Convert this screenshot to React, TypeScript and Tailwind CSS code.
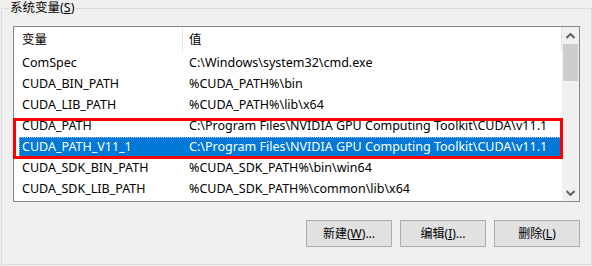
import React from "react";

const rows = [
  { name: "ComSpec", value: "C:\\Windows\\system32\\cmd.exe" },
  { name: "CUDA_BIN_PATH", value: "%CUDA_PATH%\\bin" },
  { name: "CUDA_LIB_PATH", value: "%CUDA_PATH%\\lib\\x64" },
  { name: "CUDA_PATH", value: "C:\\Program Files\\NVIDIA GPU Computing Toolkit\\CUDA\\v11.1" },
  { name: "CUDA_PATH_V11_1", value: "C:\\Program Files\\NVIDIA GPU Computing Toolkit\\CUDA\\v11.1", selected: true },
  { name: "CUDA_SDK_BIN_PATH", value: "%CUDA_SDK_PATH%\\bin\\win64" },
  { name: "CUDA_SDK_LIB_PATH", value: "%CUDA_SDK_PATH%\\common\\lib\\x64" },
];

const font = { fontFamily: '"Noto Sans", "Noto Sans CJK SC", sans-serif' };

function Btn({ label, hot, tail }: { label: string; hot: string; tail: string }) {
  return (
    <button className="w-[86px] h-[27px] border border-[#adadad] bg-[#e1e1e1] text-[12px] text-black flex items-center justify-center">
      {label}(<span className="underline">{hot}</span>){tail}
    </button>
  );
}

export default function App() {
  return (
    <div className="w-[592px] h-[266px] bg-[#f0f0f0] overflow-hidden" style={font}>
      <fieldset className="ml-[1px] w-[591px] h-[265px] border border-[#dcdcdc] px-[11px] pt-0 pb-0">
        <legend className="ml-[-4px] px-[1px] text-[12.5px] leading-[16px] text-black">
          系统变量(<span className="underline">S</span>)
        </legend>
        {/* 列表 */}
        <div className="relative mt-[10px] w-[567px] h-[176px] border border-[#828790] bg-white flex">
          <div className="w-[548px] flex flex-col">
            <div className="h-[26px] flex text-[12.5px] text-black border-r border-[#e5e5e5]">
              <div className="w-[169px] pl-[8px] flex items-center border-r border-[#e5e5e5]">变量</div>
              <div className="flex-1 pl-[6px] flex items-center">值</div>
            </div>
            {rows.map((r) => (
              <div
                key={r.name}
                className={`h-[21px] flex items-center text-[12.5px] ${r.selected ? "bg-[#0078d7] text-white ml-[5px] outline outline-1 outline-dotted outline-offset-[-1px] outline-[#99c9ef]" : "text-black"}`}
              >
                <div className={`${r.selected ? "w-[164px] pl-[3px]" : "w-[169px] pl-[8px]"} whitespace-nowrap`}>{r.name}</div>
                <div className="pl-[6px] whitespace-nowrap">{r.value}</div>
              </div>
            ))}
          </div>
          {/* 滚动条 */}
          <div className="w-[17px] bg-[#f0f0f0] flex flex-col">
            <div className="h-[17px] flex items-center justify-center">
              <svg width="9" height="6" viewBox="0 0 9 6">
                <path d="M0.5 5 L4.5 1 L8.5 5" fill="none" stroke="#606060" strokeWidth="2" />
              </svg>
            </div>
            <div className="mx-[1px] h-[37px] bg-[#cdcdcd]" />
            <div className="flex-1" />
            <div className="h-[17px] flex items-center justify-center">
              <svg width="9" height="6" viewBox="0 0 9 6">
                <path d="M0.5 1 L4.5 5 L8.5 1" fill="none" stroke="#606060" strokeWidth="2" />
              </svg>
            </div>
          </div>
          {/* 标注框 */}
          <div className="absolute left-[-1px] top-[91px] w-[550px] h-[41px] border-[3px] border-[#ff0000] pointer-events-none" />
        </div>
        {/* 按钮 */}
        <div className="mt-[18px] w-[567px] flex justify-end gap-[8px]">
          <Btn label="新建" hot="W" tail="..." />
          <Btn label="编辑" hot="I" tail="..." />
          <Btn label="删除" hot="L" tail="" />
        </div>
      </fieldset>
    </div>
  );
}
